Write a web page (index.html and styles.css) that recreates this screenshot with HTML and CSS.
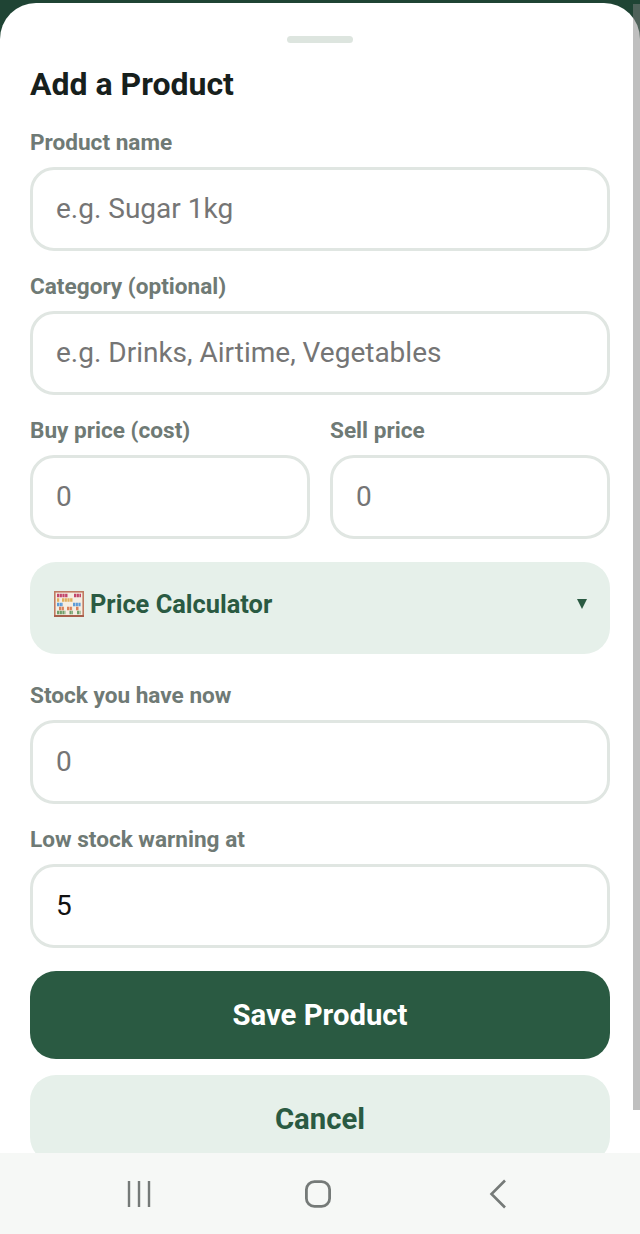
FILE: index.html
```html
<!DOCTYPE html>
<html lang="en">
<head>
<meta charset="utf-8">
<title>Add a Product</title>
<link rel="stylesheet" href="styles.css">
</head>
<body>
<main class="sheet">
  <div class="handle"></div>
  <h1 class="title">Add a Product</h1>
  <div class="field">
    <label class="label">Product name</label>
    <input class="input" type="text" placeholder="e.g. Sugar 1kg">
  </div>
  <div class="field">
    <label class="label">Category (optional)</label>
    <input class="input" type="text" placeholder="e.g. Drinks, Airtime, Vegetables">
  </div>
  <div class="row">
    <div class="field">
      <label class="label">Buy price (cost)</label>
      <input class="input" type="text" placeholder="0">
    </div>
    <div class="field">
      <label class="label">Sell price</label>
      <input class="input" type="text" placeholder="0">
    </div>
  </div>
  <div class="calc">
    <svg class="abacus" viewBox="0 0 30 26" aria-hidden="true">
      <rect x="0.800" y="0.800" width="28.400" height="24.400" fill="#f4ede2" stroke="#c07a62" stroke-width="1.600"/>
      <rect x="0" y="24" width="30" height="2" fill="#a85f4c"/>
      <g fill="none" stroke-width="3.400" stroke-dasharray="2.200 0.500">
        <path d="M3 4.500h11M20 4.500h7" stroke="#c2456a"/>
        <path d="M3 9h2.500M8 9h11" stroke="#e0ae5e"/>
        <path d="M3 13.500h6M19 13.500h8" stroke="#5c9bd8"/>
        <path d="M5 17.500h5M13 17.500h5.500M22 17.500h3" stroke="#d9805a"/>
        <path d="M3 21.500h8.500M15.500 21.500h3.500M23 21.500h3.500" stroke="#6f9f6a"/>
      </g>
    </svg>
    <span class="calc-text">Price Calculator</span>
    <span class="caret"></span>
  </div>
  <div class="field field-after-calc">
    <label class="label">Stock you have now</label>
    <input class="input" type="text" placeholder="0">
  </div>
  <div class="field">
    <label class="label">Low stock warning at</label>
    <input class="input" type="text" value="5">
  </div>
  <button class="btn btn-primary" type="button">Save Product</button>
  <button class="btn btn-secondary" type="button">Cancel</button>
</main>
<nav class="navbar">
  <svg class="nav-icon" viewBox="0 0 30 30" aria-hidden="true"><path d="M5 2v26M15 2v26M25 2v26" fill="none" stroke="#757a78" stroke-width="2.400"/></svg>
  <svg class="nav-icon" viewBox="0 0 30 30" aria-hidden="true"><rect x="3.400" y="2.600" width="23.200" height="24.800" rx="8" fill="none" stroke="#757a78" stroke-width="2.800"/></svg>
  <svg class="nav-icon" viewBox="0 0 30 30" aria-hidden="true"><path d="M22 1.500 8.500 15 22 28.500" fill="none" stroke="#757a78" stroke-width="2.600"/></svg>
</nav>
<div class="scrollbar"></div>
</body>
</html>
```
FILE: styles.css
```css
* { box-sizing: border-box; }
html, body { margin: 0; padding: 0; height: 1234px; overflow: hidden; }
body {
  position: relative;
  display: flex;
  flex-direction: column;
  background: #1f4434;
  padding-top: 3px;
  font-family: Roboto, "Liberation Sans", sans-serif;
}
.sheet {
  flex: 1;
  min-height: 0;
  overflow: hidden;
  background: #fff;
  border-radius: 36px 36px 0 0;
  padding: 33px 30px 0;
  display: flex;
  flex-direction: column;
}
.handle {
  flex: none;
  width: 66px;
  height: 7px;
  border-radius: 4px;
  background: #dde5df;
  align-self: center;
}
.title {
  margin: 21px 0 3px;
  font-size: 32px;
  line-height: 40px;
  font-weight: 700;
  color: #17201c;
}
.field {
  flex: none;
  display: flex;
  flex-direction: column;
  min-width: 0;
  margin-top: 21px;
}
.field-after-calc { margin-top: 27px; }
.label {
  font-size: 22.600px;
  line-height: 30px;
  font-weight: 700;
  color: #6f7a75;
  margin-bottom: 9px;
}
.input {
  width: 100%;
  height: 84px;
  padding: 0 23px 2px;
  border: 3px solid #e0e6e2;
  border-radius: 24px;
  background: #fff;
  font-family: inherit;
  font-size: 28px;
  color: #111;
  outline: none;
}
.input::placeholder { color: #757575; opacity: 1; }
.row {
  flex: none;
  display: grid;
  grid-template-columns: 1fr 1fr;
  gap: 20px;
}
.calc {
  flex: none;
  margin-top: 23px;
  height: 92px;
  border-radius: 26px;
  background: #e6f0ea;
  padding: 0 23px 8px 24px;
  display: flex;
  align-items: center;
}
.abacus { width: 30px; height: 26px; flex: none; }
.calc-text {
  margin-left: 6px;
  flex: 1;
  font-size: 25.400px;
  font-weight: 700;
  color: #2a5a42;
}
.caret {
  width: 0;
  height: 0;
  border-left: 5px solid transparent;
  border-right: 5px solid transparent;
  border-top: 10px solid #2a5a42;
}
.btn {
  flex: none;
  display: block;
  width: 100%;
  height: 88px;
  border: 0;
  border-radius: 26px;
  font-family: inherit;
  font-size: 29.300px;
  font-weight: 700;
}
.btn-primary { margin-top: 23px; background: #2a5a42; color: #fff; }
.btn-secondary { margin-top: 16px; background: #e6f0ea; color: #2a5a42; }
.scrollbar {
  position: absolute;
  top: 4px;
  right: 0;
  width: 7px;
  height: 1106px;
  background: rgba(128, 128, 128, 0.5);
}
.navbar {
  flex: none;
  height: 81px;
  background: #f6f8f6;
  padding-right: 4px;
  display: grid;
  grid-template-columns: repeat(3, 179.500px);
  justify-content: center;
  justify-items: center;
  align-items: center;
}
.nav-icon { width: 30px; height: 30px; }
```
